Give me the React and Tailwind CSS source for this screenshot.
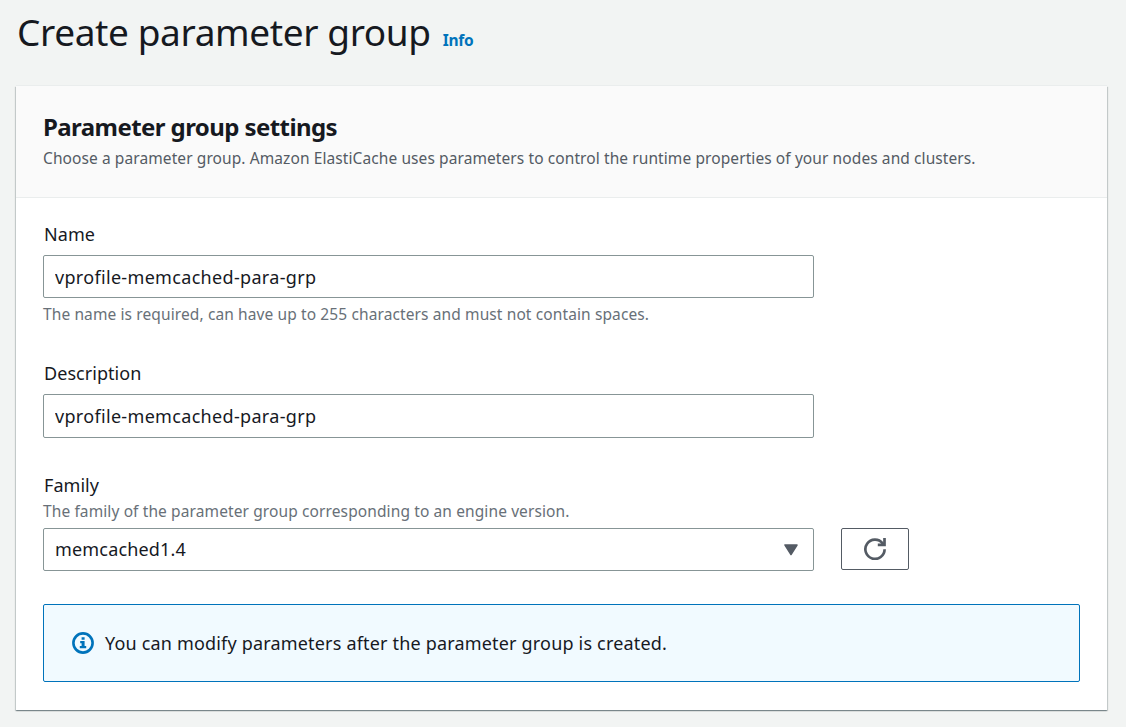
import React from "react";

function Field({ className, children }) {
  return <div className={className}>{children}</div>;
}

function Label({ className, children }) {
  return (
    <label className={`ml-px block w-fit whitespace-nowrap text-[18px] leading-[26px] tracking-[0.05px] ${className || ""}`}>
      {children}
    </label>
  );
}

function Hint({ className, children }) {
  return (
    <p className={`w-fit whitespace-nowrap text-[15.5px] leading-6 tracking-[0.11px] text-[#687078] ${className}`}>{children}</p>
  );
}

export default function App() {
  return (
    <div className="flex h-[727px] w-[1126px] flex-col overflow-hidden bg-[#f2f4f3] font-['Noto_Sans','Open_Sans',sans-serif] font-[450] text-[#16191f]">
      <header className="flex items-baseline pl-[17px] whitespace-nowrap">
        <h1 className="text-[37px] leading-[63px] font-normal tracking-[-0.38px]">Create parameter group</h1>
        <a className="ml-[12px] text-[15.5px] leading-6 font-bold tracking-[-0.3px] text-[#0073bb]">Info</a>
      </header>

      <main className="mt-[23px] ml-4 h-[624px] w-[1091px] bg-white shadow-[0_1px_1px_0_rgba(0,28,36,0.3),1px_1px_1px_0_rgba(0,28,36,0.15),-1px_1px_1px_0_rgba(0,28,36,0.15),0_-1px_0_0_#eaeded]">
        <div className="h-28 border-b border-[#eaeded] bg-[#fafafa] pt-[25px] pl-[27px] whitespace-nowrap">
          <h2 className="w-fit text-[24px] leading-8 font-bold tracking-[-0.58px]">Parameter group settings</h2>
          <p className="mt-[3px] w-fit text-[15.5px] leading-6 tracking-[0.09px] text-[#545b64]">
            Choose a parameter group. Amazon ElastiCache uses parameters to control the runtime properties of your nodes and clusters.
          </p>
        </div>

        <div className="px-[27px] pt-[23px]">
          <Field>
            <Label>Name</Label>
            <input
              className="mt-2 block h-[43px] w-[771px] rounded-[2px] border border-[#879596] bg-white px-[11px] text-[18px] tracking-[0.32px] outline-none"
              defaultValue="vprofile-memcached-para-grp"
            />
            <Hint className="mt-1">The name is required, can have up to 255 characters and must not contain spaces.</Hint>
          </Field>

          <Field className="mt-[34px]">
            <Label>Description</Label>
            <input
              className="mt-2 block h-[44px] w-[771px] rounded-[2px] border border-[#879596] bg-white px-[11px] text-[18px] tracking-[0.32px] outline-none"
              defaultValue="vprofile-memcached-para-grp"
            />
          </Field>

          <Field className="mt-[34px]">
            <Label>Family</Label>
            <Hint className="mt-px">The family of the parameter group corresponding to an engine version.</Hint>
            <div className="mt-[5px] flex gap-[27px]">
              <button className="flex h-[43px] w-[771px] items-center justify-between rounded-[2px] border border-[#879596] bg-white pr-[15px] pl-[11px] text-[18px] tracking-[0.17px]">
                <span>memcached1.4</span>
                <svg width="14" height="12" viewBox="0 0 14 12" fill="#545b64" stroke="#545b64" strokeWidth="1.5" strokeLinejoin="round">
                  <path d="M1 1h12L7 10.5z" />
                </svg>
              </button>
              <button className="flex h-[42px] w-[68px] items-center justify-center rounded-[2px] border border-[#545b64] bg-white" aria-label="Refresh">
                <svg width="22" height="22" viewBox="0 0 22 22" fill="none" stroke="#545b64" strokeWidth="2.7">
                  <path d="M20.6 11.2A9.6 9.6 0 1 1 18.6 5.4L19.8 7" />
                  <path d="M20.5 0v6.8H13.8" />
                </svg>
              </button>
            </div>
          </Field>

          <div className="mt-[33px] flex h-[78px] w-[1037px] items-center rounded-[2px] border border-[#0073bb] bg-[#f1faff] pl-[28px]">
            <svg width="22" height="22" viewBox="0 0 22 22" fill="none">
              <circle cx="11" cy="11" r="9.6" stroke="#0073bb" strokeWidth="2.6" />
              <path d="M9.6 5.2h3v2.6h-3zM8.2 9.1h4.4v5h1.6v2.2H7.8v-2.2h1.8v-2.9H8.2z" fill="#0073bb" />
            </svg>
            <span className="ml-[11px] whitespace-nowrap text-[18px] leading-[26px] tracking-[0.18px]">
              You can modify parameters after the parameter group is created.
            </span>
          </div>
        </div>
      </main>
    </div>
  );
}
